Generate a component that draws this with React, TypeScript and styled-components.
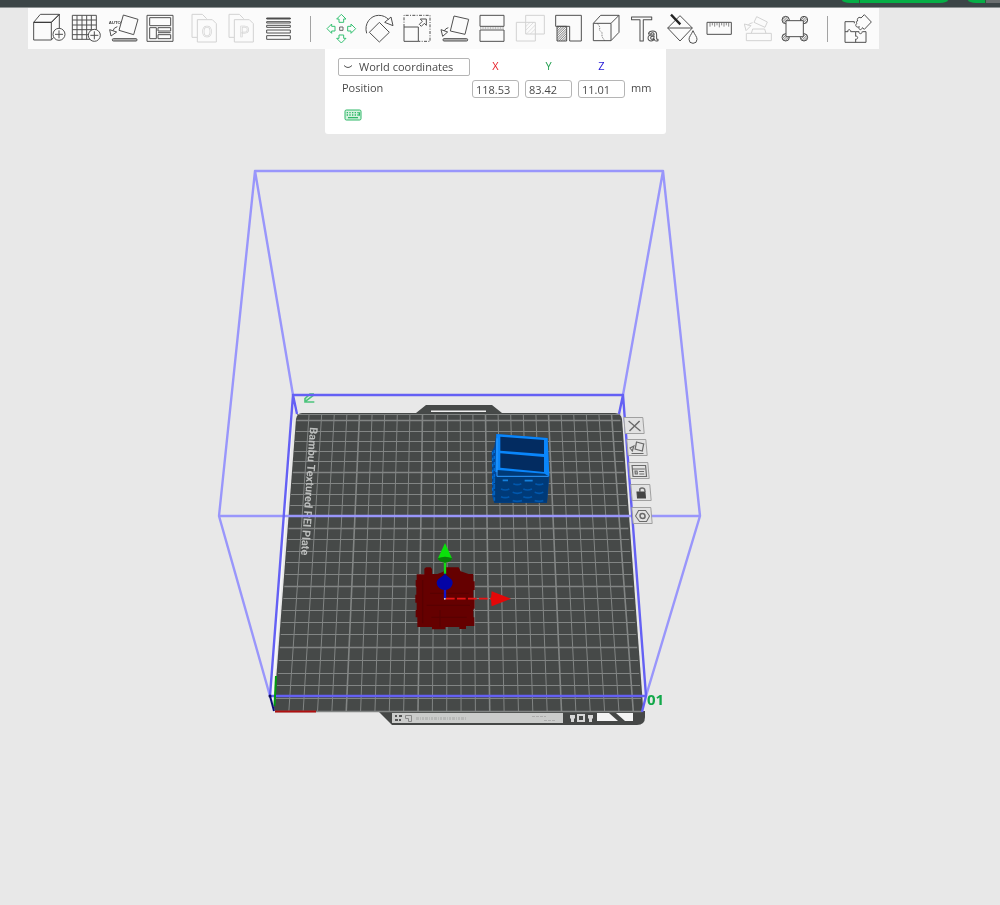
import React from "react";
import styled, { createGlobalStyle, css } from "styled-components";

const GlobalStyle = createGlobalStyle`
  * { box-sizing: border-box; }
  body {
    margin: 0;
    background: #e8e8e8;
    font-family: "Open Sans", "Noto Sans", sans-serif;
    color: #4a4a4a;
  }
`;

const Page = styled.div`
  display: flex;
  flex-direction: column;
`;

const TitleBar = styled.header`
  display: flex;
  justify-content: flex-end;
  align-items: flex-start;
  height: 8px;
  background: #3c4547;
  border-bottom: 1px solid #8d9293;
`;

const ActionGroup = styled.div<{ $gap: number }>`
  display: flex;
  height: 3px;
  margin-right: ${(p) => p.$gap}px;
  overflow: hidden;
`;

const ActionButton = styled.button<{ $width: number; $tone?: "grey"; $round?: "left" | "right" }>`
  width: ${(p) => p.$width}px;
  height: 3px;
  padding: 0;
  border: 0;
  background: ${(p) => (p.$tone === "grey" ? "#6b6f70" : "#06ae46")};
  ${(p) => p.$round === "left" && css`border-bottom-left-radius: 8px 3px; border-right: 1px solid #2c5a3b;`}
  ${(p) => p.$round === "right" && css`border-bottom-right-radius: 8px 3px;`}
`;

const Toolbar = styled.nav`
  display: flex;
  align-items: center;
  align-self: flex-start;
  height: 41px;
  margin-left: 28px;
  padding: 0 3px 0 2px;
  background: #fbfbfb;
`;

const ToolGroup = styled.div<{ $width: number; $count: number; $before?: number }>`
  display: grid;
  grid-template-columns: repeat(${(p) => p.$count}, minmax(0, 1fr));
  width: ${(p) => p.$width}px;
  margin-left: ${(p) => p.$before ?? 0}px;
`;

const ToolButton = styled.button<{ $state?: "off" | "active" }>`
  display: flex;
  justify-content: center;
  min-width: 0;
  padding: 0;
  border: 0;
  background: none;
  color: ${(p) => (p.$state === "off" ? "#d2d2d2" : p.$state === "active" ? "#35c172" : "#505050")};
`;

const Glyph = styled.svg`
  flex: none;
  width: 38px;
  height: 41px;
  fill: none;
  stroke: currentColor;
  stroke-width: 3;
  stroke-linejoin: round;
  will-change: transform;
`;

const Separator = styled.span`
  width: 1px;
  height: 26px;
  margin: 0 11px 0 13px;
  background: #a3a3a3;
`;

const Viewport = styled.main`
  position: relative;
  width: 100%;
  aspect-ratio: 1000 / 856;
`;

const Scene = styled.svg`
  display: block;
  width: 100%;
  height: 100%;
  will-change: transform;
`;

const Panel = styled.form`
  position: absolute;
  top: 0;
  left: 325px;
  width: 341px;
  padding: 9px 13px 13px;
  background: #fff;
  border-radius: 0 0 3px 3px;
  font-size: 11px;
  line-height: 16px;
  will-change: transform;
`;

const PanelRow = styled.div`
  display: grid;
  grid-template-columns: 134px 53px 53px 53px auto;
  align-items: start;
  height: 18px;
  margin-bottom: 4px;
`;

const SelectBox = styled.div`
  display: flex;
  align-items: center;
  width: 132px;
  height: 18px;
  padding-left: 4px;
  border: 1px solid #b5b5b5;
  border-radius: 2px;
`;

const Chevron = styled.svg`
  flex: none;
  width: 10px;
  height: 6px;
  fill: none;
  stroke: #555;
`;

const Select = styled.select`
  appearance: none;
  flex: 1;
  min-width: 0;
  height: 16px;
  padding: 0 0 0 6px;
  border: 0;
  background: none;
  color: inherit;
  font: inherit;
`;

const AxisName = styled.label<{ $color: string }>`
  width: 47px;
  text-align: center;
  color: ${(p) => p.$color};
`;

const RowName = styled.span`
  padding-left: 4px;
`;

const NumberInput = styled.input`
  width: 47px;
  height: 18px;
  padding: 0 3px;
  border: 1px solid #b5b5b5;
  border-radius: 3px;
  background: #fff;
  color: inherit;
  font: inherit;
`;

const KeyboardButton = styled.button`
  display: block;
  width: 18px;
  height: 12px;
  margin: 11px 0 0 6px;
  padding: 0;
  border: 0;
  background: none;
`;

const PlateButton = styled.button`
  position: absolute;
  width: 20px;
  height: 17px;
  padding: 0;
  border: 1px solid #a0a0a0;
  border-radius: 1px;
  background: #e2e2e2;
  display: flex;
  align-items: center;
  justify-content: center;
  transform: skewX(5deg);
`;

const PlateGlyph = styled.svg`
  flex: none;
  width: 17px;
  height: 14px;
  fill: none;
  stroke: #6a6a6a;
`;

type Tool = { name: string; x: number; off?: boolean; active?: boolean; art: React.ReactNode };

const Hatch = () => (
  <pattern id="hatch" width="5" height="5" patternUnits="userSpaceOnUse" patternTransform="rotate(45)">
    <path d="M0 0V5" stroke="#555" strokeWidth="3.4" />
  </pattern>
);

/* Tool artwork is drawn at three units to the pixel. */
const sceneTools: Tool[] = [
  { name: "Add model", x: 29, art: (
    <><path d="M40 67H93V120H40ZM40 67L60 43H117L93 67M117 43V84M93 120L100 112" /><path d="M40 67H93L117 43" stroke="#333" /><circle cx="116" cy="103" r="18" fill="#fbfbfb" /><path d="M104 103H128M116 91V115" /></>
  ) },
  { name: "Add plate", x: 140, art: (
    <><path d="M156 46H228V118H156ZM170 46V118M185 46V118M199 46V118M213 46V118M156 60H228M156 75H228M156 89H228M156 104H228" /><circle cx="222" cy="106" r="18" fill="#fbfbfb" /><path d="M210 106H234M222 94V118" /></>
  ) },
  { name: "Auto orient", x: 251, art: (
    <><path d="M309 45L353 58L340 104L296 91Z" /><path d="M291 80Q280 83 278 92M268 89L272 108L289 96Z" /><rect x="276" y="116" width="74" height="7" rx="3" fill="#bdbdbd" /><text x="265" y="71" fontSize="13" fontWeight="700" fontFamily="Liberation Sans, sans-serif" fill="#444" stroke="none">AUTO</text></>
  ) },
  { name: "Arrange", x: 362, art: (
    <path d="M380 46H458V124H380ZM388 53H451V77H388ZM388 83H408V116H388ZM413 83H451V93H413ZM413 104H451V116H413ZM413 98H451" />
  ) },
];

const objectTools: Tool[] = [
  { name: "Split to objects", x: 497, off: true, art: (
    <><path d="M530 112H515V43H546L559 56M531 59H576L588 71V126H531Z" /><text x="560" y="112" textAnchor="middle" fontSize="46" fontFamily="Roboto, sans-serif" strokeWidth="2">O</text></>
  ) },
  { name: "Split to parts", x: 608, off: true, art: (
    <><path d="M641 112H626V43H657L670 56M642 59H687L699 71V126H642Z" /><text x="672" y="112" textAnchor="middle" fontSize="46" fontFamily="Roboto, sans-serif" strokeWidth="2">P</text></>
  ) },
  { name: "Variable layer height", x: 719, art: (
    <><path d="M739 54H810V57H739Z" fill="#444" /><path d="M739 65H810V69H739ZM739 76H810V82H739ZM739 90H810V99H739ZM739 107H810V118H739Z" /></>
  ) },
];

const moveArrow = "M124 43L138 57H131V67H117V57H110Z";

const editTools: Tool[] = [
  { name: "Move", x: 66, active: true, art: (
    <><path d={moveArrow} /><path d={moveArrow} transform="rotate(90 124 86)" /><path d={moveArrow} transform="rotate(180 124 86)" /><path d={moveArrow} transform="rotate(270 124 86)" /><rect x="119" y="81" width="10" height="10" stroke="#666" /></>
  ) },
  { name: "Rotate", x: 179, art: (
    <path d="M237 67L267 97L237 126L207 97ZM199 100C190 71 211 46 235 46C248 46 258 51 265 59M253 67L272 51L278 77Z" />
  ) },
  { name: "Scale", x: 293, art: (
    <><path d="M311 81V46H389V124H354" strokeDasharray="9 4 3 4" /><path d="M311 81H354V124H311ZM360 57H378V76L372 70L363 79L357 73L366 64Z" /></>
  ) },
  { name: "Lay on face", x: 406, art: (
    <><path d="M463 48L507 58L496 103L452 93Z" /><path d="M446 83Q437 85 434 93M424 89L429 109L444 96Z" /><rect x="430" y="116" width="74" height="7" rx="3" fill="#bdbdbd" /></>
  ) },
  { name: "Cut", x: 520, art: (
    <><path d="M541 46H613V79H541ZM541 90H613V124H541Z" /><path d="M541 84H613" strokeDasharray="3 2" stroke="#888" /></>
  ) },
  { name: "Mesh boolean", x: 634, off: true, art: (
    <><path d="M678 46H734V102H678ZM650 67H707V123H650Z" /><path d="M678 80L691 67M678 91L702 67M680 102L707 75M692 102L707 87" strokeWidth="2" /></>
  ) },
  { name: "Supports painting", x: 747, art: (
    <><defs><Hatch /></defs><rect x="771" y="79" width="29" height="44" fill="url(#hatch)" /><path d="M767 46H844V123H809V79H767Z" /></>
  ) },
  { name: "Seam painting", x: 21, art: (
    <><path d="M40 70H93V122H40ZM40 70L62 46H117L93 70M117 46V97L93 122" /><path d="M52 70L60 82L58 90L66 98L66 110L74 122" strokeDasharray="5 3" strokeWidth="2" /></>
  ) },
  { name: "Text", x: 134, art: (
    <text x="151" y="122" fontSize="107" fontFamily="Liberation Sans, sans-serif">T<tspan dx="-15" fontSize="56" fontWeight="700">a</tspan></text>
  ) },
  { name: "Colour painting", x: 248, art: (
    <><path d="M299 47L336 84L299 123L262 84ZM262 84H336" /><path d="M272 44L300 73" stroke="#222" strokeWidth="7" /><path d="M338 92C343 104 350 110 350 118A12 12 0 0 1 326 118C326 110 333 104 338 92Z" fill="#fbfbfb" /></>
  ) },
  { name: "Measure", x: 361, art: (
    <><path d="M382 67H455V103H382Z" /><path d="M391 68V80M398 68V76M405 68V80M412 68V76M419 68V82M426 68V76M433 68V80M440 68V76M447 68V80" strokeWidth="2" /></>
  ) },
  { name: "Assembly", x: 475, off: true, art: (
    <path d="M500 100H575V122H500ZM515 100L519 87H555L559 100M531 50L563 66L556 82L523 67ZM519 68Q507 70 505 77M494 72L499 92L514 77Z" />
  ) },
  { name: "Fit frame", x: 588, art: (
    <><circle cx="617" cy="60" r="11" fill="url(#hatch)" /><circle cx="672" cy="60" r="11" fill="url(#hatch)" /><circle cx="617" cy="112" r="11" fill="url(#hatch)" /><circle cx="672" cy="112" r="11" fill="url(#hatch)" /><path d="M618 62H670V110H618Z" fill="#fbfbfb" /></>
  ) },
];

const pluginTools: Tool[] = [
  { name: "Assembly view", x: 776, art: (
    <><path d="M822 65H794V127H857V95H846M794 95H803C800 87 813 87 811 95H826M826 127V117C834 120 834 106 826 109V95H836C834 103 847 103 845 95M822 65V70" /><path d="M852 44L873 66L852 88L846 83C843 94 832 88 837 80C828 85 822 75 830 70C826 65 828 63 832 63C828 54 838 49 842 54Z" /></>
  ) },
];

const Tools = ({ items }: { items: Tool[] }) => (
  <>
    {items.map((t) => (
      <ToolButton key={t.name} type="button" aria-label={t.name} disabled={t.off} $state={t.off ? "off" : t.active ? "active" : undefined}>
        <Glyph viewBox={`${t.x} 24 114 123`}>{t.art}</Glyph>
      </ToolButton>
    ))}
  </>
);

const rowHeights = [711, 698, 685, 673, 660, 647, 634, 622, 610, 598, 586, 574, 562, 551, 539, 528, 516, 505, 494, 483, 472, 461, 451, 441, 431, 420, 414];

const edgeX = (y: number, side: "left" | "right") => {
  const t = (y - 413) / 299;
  return side === "left" ? 296 - 22 * t : 621 + 22 * t;
};

const BuildPlate = () => (
  <g>
    <path d="M293 396L297 414M292 414L272 700" stroke="#f6f6f6" strokeWidth="3" />
    <path d="M416 413L426 405H492L502 413Z" fill="#464948" />
    <path d="M431 410.500H486V412H431Z" fill="#f0f0f0" />
    <path d="M379 712L392 725H637Q645 725 645 717V711Z" fill="#454746" />
    <path d="M392 713H563V723H392Z" fill="#cbcccb" />
    <path d="M395 715h2v2h-2zM399 715h3v2h-3zM395 719h3v2h-3zM399 719h2v2h-2z" fill="#555" />
    <path d="M405.500 715.500h6v6h-3v-3h-3z" fill="none" stroke="#888" />
    <path d="M416 718.500H467" stroke="#b8b9b8" strokeWidth="3" strokeDasharray="3 1 1 1 2 1" />
    <path d="M532 716.500H546M544 720.500H556" stroke="#adadad" strokeDasharray="3 1" />
    <path d="M570 715h5v3l-1 1v3h-3v-3l-1-1zM588 715h5v3l-1 1v3h-3v-3l-1-1z" fill="#d6d6d6" />
    <rect x="578" y="715" width="6" height="6" fill="none" stroke="#d6d6d6" strokeWidth="2" />
    <path d="M597 713H609L618 721H597ZM616 713H633V721H625Z" fill="#f4f4f4" />
    <path d="M302 413H615Q621 413 622 419L643 706Q643 712 640 712H279Q274 712 274 707L296 419Q297 413 302 413Z" fill="#464948" />
    <g stroke="#828584" fill="none">
      {rowHeights.map((y, i) => (
        <path key={y} d={`M${edgeX(y, "left") + 1} ${y + 0.5}H${edgeX(y, "right") - 1}`} strokeWidth={i % 5 === 0 ? 1.5 : 1} />
      ))}
      {Array.from({ length: 25 }, (_, k) => k + 1).map((n) => (
        <path key={n} d={`M${296.5 + 12.6 * n} 414L${274.5 + 14.35 * n} 711`} strokeWidth={n % 5 === 0 ? 1.6 : 1} />
      ))}
    </g>
    <text transform="translate(310 427) rotate(94)" fontFamily="Roboto, sans-serif" fontSize="11" fontWeight="700" fill="#bcbebd">Bambu Textured PEI Plate</text>
    <g transform="translate(260 380) scale(0.3333)" fill="none" stroke="#4cc47c" strokeWidth="5">
      <path d="M162 42H150L135 56V66H163M135 65L160 46" />
    </g>
  </g>
);

const BlueBox = () => (
  <g transform="translate(400 380) scale(0.3333)">
    <path d="M289 162L443 174L448 288L441 368H283L277 350L275 215L283 200Z" fill="#00479a" />
    <path d="M283 290H446L441 368H283Z" fill="#003a78" />
    <path d="M278 215V345M283 210V350" stroke="#006cd6" strokeWidth="4" strokeDasharray="9 9" />
    <path d="M289 162L443 174L448 288L286 276Z" fill="#0a86fb" />
    <path d="M301 170L432 180V222L301 212Z" fill="#032c61" />
    <path d="M301 220L432 231V276L301 263Z" fill="#032c61" />
    <path d="M292 270L434 281L446 289H292Z" fill="#003a78" />
    <path d="M291 175V289H446" fill="none" stroke="#2e9bff" strokeWidth="3" />
    <g stroke="#0057ac" strokeWidth="5" fill="none">
      <path d="M308 301H324M374 302H398" stroke="#1480dd" />
      <path d="M340 311Q352 317 364 311M406 311Q418 317 430 311M303 327Q316 333 328 327M370 327Q383 333 396 327" />
      <path d="M338 337Q352 343 366 337M404 337Q418 343 430 337M303 350Q316 356 328 350M370 350Q383 356 396 350M338 362Q352 366 366 362M404 362Q418 366 430 362" />
    </g>
    <path d="M283 292V362" stroke="#0062bd" strokeWidth="5" strokeDasharray="14 6" />
  </g>
);

const RedBox = () => (
  <g transform="translate(390 530) scale(0.3333)">
    <path d="M80 133H103V116L108 112H122L126 117V132H142L160 125L168 112H206L212 124L236 132H250V154H254V180H250V205H254V236H250V262H253V288H228V297H208V291H166V298H126V291H82V262H77V240H80V218H76V194H79V170H77V150H80Z" fill="#650000" />
    <path d="M98 150V280M120 190H236M110 226H240M124 262H230M150 240V290" stroke="#590000" strokeWidth="4" fill="none" />
    <path d="M165 90V132" stroke="#16dc16" strokeWidth="7" />
    <path d="M165 39L187 87Q165 103 143 87Z" fill="#0be00b" />
    <path d="M143 85Q165 76 187 85Q183 97 165 98Q147 97 143 85Z" fill="#087d08" />
    <path d="M165 160V207" stroke="#1313c8" strokeWidth="7" />
    <path d="M165 128C169 141 187 143 188 157C188 172 176 180 165 180C152 180 140 172 140 157C142 143 161 141 165 128Z" fill="#0404a5" />
    <path d="M168 206H305" stroke="#e81616" strokeWidth="5" strokeDasharray="26 7" />
    <path d="M305 184L363 206L305 229Q301 206 305 184Z" fill="#e30808" />
    <rect x="162" y="204" width="5" height="5" fill="#ccc" />
  </g>
);

const Volume = () => (
  <g fill="none" strokeLinejoin="round">
    <path d="M293 395L255 171H663L623 395M255 171L219 516H700L663 171M219 516L270 696M700 516L646 696" stroke="#9996fb" strokeWidth="2.400" />
    <path d="M297 414L293 395H623L619 414M293 395L270 696H646L623 395M646 696L642 712" stroke="#6460f4" strokeWidth="2.400" />
    <path d="M276 676L274.500 706" stroke="#009a10" strokeWidth="2" />
    <path d="M275 711.500H316" stroke="#b01010" strokeWidth="2" />
    <path d="M270 696L274 711" stroke="#0a0a78" strokeWidth="2" />
    <circle cx="270" cy="696" r="1.500" fill="#0a0a50" />
  </g>
);

const plateActions = [
  { name: "Remove plate", left: 62.4, top: 43, art: <path d="M3 2L14 12M14 2L3 12" strokeWidth="1.400" /> },
  { name: "Orient plate", left: 62.7, top: 45.6, art: <path d="M8 1L15 3L13 10L6 8ZM5 5L1 7L3 10ZM2 12.500H14" strokeWidth="1.200" /> },
  { name: "Arrange plate", left: 62.9, top: 48.2, art: <path d="M1.500 1.500H15V12.500H1.500ZM2 5H14M4 7H6V10H4ZM8 7.500H13M8 10H13" strokeWidth="1.200" /> },
  { name: "Lock plate", left: 63.1, top: 50.8, art: <><path d="M4 6H12V12H4Z" fill="#444" stroke="#444" /><path d="M7 6V4Q7 2 9.500 2T12 4V6" strokeWidth="1.500" /></> },
  { name: "Plate settings", left: 63.2, top: 53.5, art: <><path d="M5 1.500H12L15.500 7L12 12.500H5L1.500 7Z" /><circle cx="8.500" cy="7" r="2.500" strokeWidth="1.500" /></> },
];

const axes = [
  { id: "x", label: "X", color: "#e8202a", value: "118.53" },
  { id: "y", label: "Y", color: "#1f9d4d", value: "83.42" },
  { id: "z", label: "Z", color: "#2a20d8", value: "11.01" },
];

const MovePanel = () => (
  <Panel>
    <PanelRow>
      <SelectBox>
        <Chevron viewBox="0 0 10 6"><path d="M1 1.500Q5 5.500 9 1.500" /></Chevron>
        <Select aria-label="Coordinate system" defaultValue="world">
          <option value="world">World coordinates</option>
          <option value="object">Object coordinates</option>
        </Select>
      </SelectBox>
      {axes.map((a) => (
        <AxisName key={a.id} htmlFor={`pos-${a.id}`} $color={a.color}>{a.label}</AxisName>
      ))}
    </PanelRow>
    <PanelRow>
      <RowName>Position</RowName>
      {axes.map((a) => (
        <NumberInput key={a.id} id={`pos-${a.id}`} type="text" inputMode="decimal" defaultValue={a.value} />
      ))}
      <span>mm</span>
    </PanelRow>
    <KeyboardButton type="button" aria-label="Keyboard shortcuts">
      <svg width="18" height="12" viewBox="0 0 54 36" fill="none" stroke="#2fb868" strokeWidth="3">
        <rect x="3" y="3" width="48" height="30" rx="4" fill="#d5f1df" />
        <path d="M8 11H46M8 18H46" strokeDasharray="4 4" strokeWidth="4" />
        <path d="M12 26H42M46 10V20" strokeWidth="4" />
      </svg>
    </KeyboardButton>
  </Panel>
);

export default function App() {
  return (
    <Page>
      <GlobalStyle />
      <TitleBar>
        <ActionGroup $gap={20}>
          <ActionButton type="button" aria-label="Slice options" $width={18} $round="left" />
          <ActionButton type="button" aria-label="Slice plate" $width={88} $round="right" />
        </ActionGroup>
        <ActionGroup $gap={0}>
          <ActionButton type="button" aria-label="Print options" $width={18} $round="left" />
          <ActionButton type="button" aria-label="Print plate" $width={14} $tone="grey" />
        </ActionGroup>
      </TitleBar>
      <Toolbar aria-label="Tools">
        <ToolGroup $width={148} $count={4}><Tools items={sceneTools} /></ToolGroup>
        <ToolGroup $width={111} $count={3} $before={8}><Tools items={objectTools} /></ToolGroup>
        <Separator />
        <ToolGroup $width={492} $count={13}><Tools items={editTools} /></ToolGroup>
        <Separator />
        <ToolGroup $width={37} $count={1}><Tools items={pluginTools} /></ToolGroup>
      </Toolbar>
      <Viewport>
        <Scene viewBox="0 49 1000 856" role="img" aria-label="Build plate with two models">
          <BuildPlate />
          <BlueBox />
          <Volume />
          <RedBox />
          <text x="647" y="705" fontFamily="Open Sans, sans-serif" fontSize="15" fontWeight="700" fill="#12a84a">01</text>
        </Scene>
        {plateActions.map((a) => (
          <PlateButton key={a.name} type="button" aria-label={a.name} style={{ left: `${a.left}%`, top: `${a.top}%` }}>
            <PlateGlyph viewBox="0 0 17 14">{a.art}</PlateGlyph>
          </PlateButton>
        ))}
        <MovePanel />
      </Viewport>
    </Page>
  );
}
